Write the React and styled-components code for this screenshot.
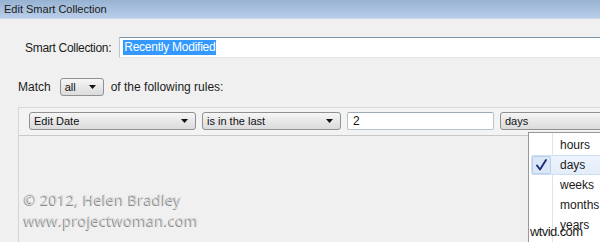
import styled, { createGlobalStyle } from "styled-components";

const Global = createGlobalStyle`
  body {
    margin: 0;
    font-family: "Liberation Sans", Arial, sans-serif;
    background: #f0f0f0;
  }
`;

const units = ["hours", "days", "weeks", "months", "years"];

const Arrow = () => (
  <svg width="7" height="4" viewBox="0 0 7 4">
    <path d="M0 0 L7 0 L3.5 4 Z" fill="#111" />
  </svg>
);

const Check = () => (
  <svg width="11" height="12" viewBox="0 0 11 12">
    <path
      d="M1 6.5 L4 10.5 L10 1"
      fill="none"
      stroke="#1d2a7a"
      strokeWidth="1.9"
      strokeLinecap="round"
      strokeLinejoin="round"
    />
  </svg>
);

const Select = ({ value, width }) => (
  <SelectBox $width={width}>
    <span>{value}</span>
    <Arrow />
  </SelectBox>
);

const App = () => {
  return (
    <Page>
      <Global />
      <TitleBar>Edit Smart Collection</TitleBar>

      <NameRow>
        <Label $tight>Smart Collection:</Label>
        <NameInput>
          <Selected>Recently Modified</Selected>
        </NameInput>
      </NameRow>

      <MatchRow>
        <Label>Match</Label>
        <Select value="all" width={44} />
        <Label>of the following rules:</Label>
      </MatchRow>

      <RulesPanel>
        <RuleRow>
          <Select value="Edit Date" width={167} />
          <Select value="is in the last" width={139} />
          <ValueInput>2</ValueInput>
          <Select value="days" width={130} />
        </RuleRow>

        <PanelBody>
          <Stamp>© 2012, Helen Bradley</Stamp>
          <Stamp>www.projectwoman.com</Stamp>
        </PanelBody>

        <Dropdown>
          {units.map((u) => (
            <Item key={u} $active={u === "days"}>
              <CheckCell $active={u === "days"}>{u === "days" && <Check />}</CheckCell>
              <ItemText>{u}</ItemText>
            </Item>
          ))}
          <SiteMark>wtvid.com</SiteMark>
        </Dropdown>
      </RulesPanel>
    </Page>
  );
};

export default App;

const Page = styled.div`
  width: 600px;
  height: 242px;
  overflow: hidden;
  background: #f0f0f0;
  display: flex;
  flex-direction: column;
`;

const TitleBar = styled.div`
  height: 19px;
  flex-shrink: 0;
  box-sizing: border-box;
  padding-left: 4px;
  line-height: 19px;
  font-size: 11px;
  color: #1a1a1a;
  background: linear-gradient(#97b3d2, #b9cee9);
  border-bottom: 1px solid #c9d6e6;
`;

const Label = styled.span`
  font-size: 12px;
  letter-spacing: ${(p) => (p.$tight ? "-0.3px" : "0")};
  color: #1c1c1c;
  white-space: nowrap;
`;

const NameRow = styled.div`
  display: flex;
  align-items: center;
  gap: 8px;
  margin-top: 18px;
  padding-left: 25px;
`;

const NameInput = styled.div`
  flex: 1;
  height: 21px;
  box-sizing: border-box;
  background: #fff;
  border-top: 1px solid #7f97ab;
  border-left: 1px solid #b9c6d2;
  border-bottom: 1px solid #dfe5ea;
  display: flex;
  align-items: center;
  padding-left: 3px;
`;

const Selected = styled.span`
  background: #3399ff;
  color: #fff;
  font-size: 12px;
  letter-spacing: -0.25px;
  line-height: 15px;
  padding: 0 1px;
`;

const MatchRow = styled.div`
  display: flex;
  align-items: center;
  gap: 9px;
  margin-top: 20px;
  padding-left: 18px;

  & > span:last-child {
    margin-left: -2px;
  }
`;

const SelectBox = styled.div`
  width: ${(p) => p.$width}px;
  height: 18px;
  flex-shrink: 0;
  box-sizing: border-box;
  border: 1px solid #8f9192;
  border-radius: 3px;
  background: linear-gradient(#f6f6f6, #e6e6e6 55%, #dcdcdc);
  display: flex;
  align-items: center;
  justify-content: space-between;
  padding: 0 7px 0 4px;
  font-size: 11px;
  color: #111;
`;

const RulesPanel = styled.div`
  position: relative;
  flex: 1;
  margin-top: 11px;
  margin-left: 18px;
  border-top: 1px solid #dadada;
  border-left: 1px solid #d6d6d6;
  display: flex;
  flex-direction: column;
`;

const RuleRow = styled.div`
  display: flex;
  gap: 6px;
  padding: 4px 0 5px 10px;
  border-bottom: 1px solid #c8c8c8;
  background: #f3f3f3;
`;

const ValueInput = styled.div`
  width: 147px;
  height: 18px;
  flex-shrink: 0;
  box-sizing: border-box;
  background: #fff;
  border: 1px solid #b8c3cc;
  border-top-color: #9eaab5;
  border-radius: 2px;
  padding-left: 5px;
  font-size: 12px;
  line-height: 16px;
  color: #111;
`;

const PanelBody = styled.div`
  padding: 53px 0 0 5px;
  display: flex;
  flex-direction: column;
`;

const Stamp = styled.span`
  font-family: "Open Sans", "Liberation Sans", sans-serif;
  font-size: 14.5px;
  line-height: 21px;
  letter-spacing: 0.3px;
  color: #d6d6d6;
  text-shadow: -1px 1px 0 #8a8a8a;
`;

const Dropdown = styled.div`
  position: absolute;
  left: 509px;
  top: 24px;
  width: 120px;
  height: 130px;
  box-sizing: border-box;
  padding: 2px 2px 0 2px;
  border: 1px solid #979797;
  box-shadow: 2px 2px 3px rgba(0, 0, 0, 0.2);
  background-image: linear-gradient(90deg, transparent 23px, #e2e3e3 23px, #e2e3e3 24px, #fff 24px, #fff 25px, transparent 25px);
  background-color: #fff;
`;

const Item = styled.div`
  height: 20px;
  box-sizing: border-box;
  display: flex;
  align-items: center;
  border-radius: 2px;
  border: 1px solid ${(p) => (p.$active ? "#cfdff3" : "transparent")};
  background: ${(p) => (p.$active ? "linear-gradient(#eef4fc, #e3ecf9)" : "transparent")};
`;

const CheckCell = styled.div`
  width: 19px;
  height: 18px;
  box-sizing: border-box;
  display: flex;
  align-items: center;
  justify-content: center;
  border-radius: 2px;
  border: 1px solid ${(p) => (p.$active ? "#b9cfeb" : "transparent")};
  background: ${(p) => (p.$active ? "#dbe7f7" : "transparent")};
`;

const ItemText = styled.span`
  margin-left: 9px;
  font-family: "Liberation Sans", Arial, sans-serif;
  font-size: 12px;
  color: #1a1a1a;
`;

const SiteMark = styled.span`
  position: absolute;
  left: 1px;
  top: 91px;
  font-family: "Liberation Sans", Arial, sans-serif;
  font-size: 13px;
  letter-spacing: -0.6px;
  color: #1a1a1a;
`;
